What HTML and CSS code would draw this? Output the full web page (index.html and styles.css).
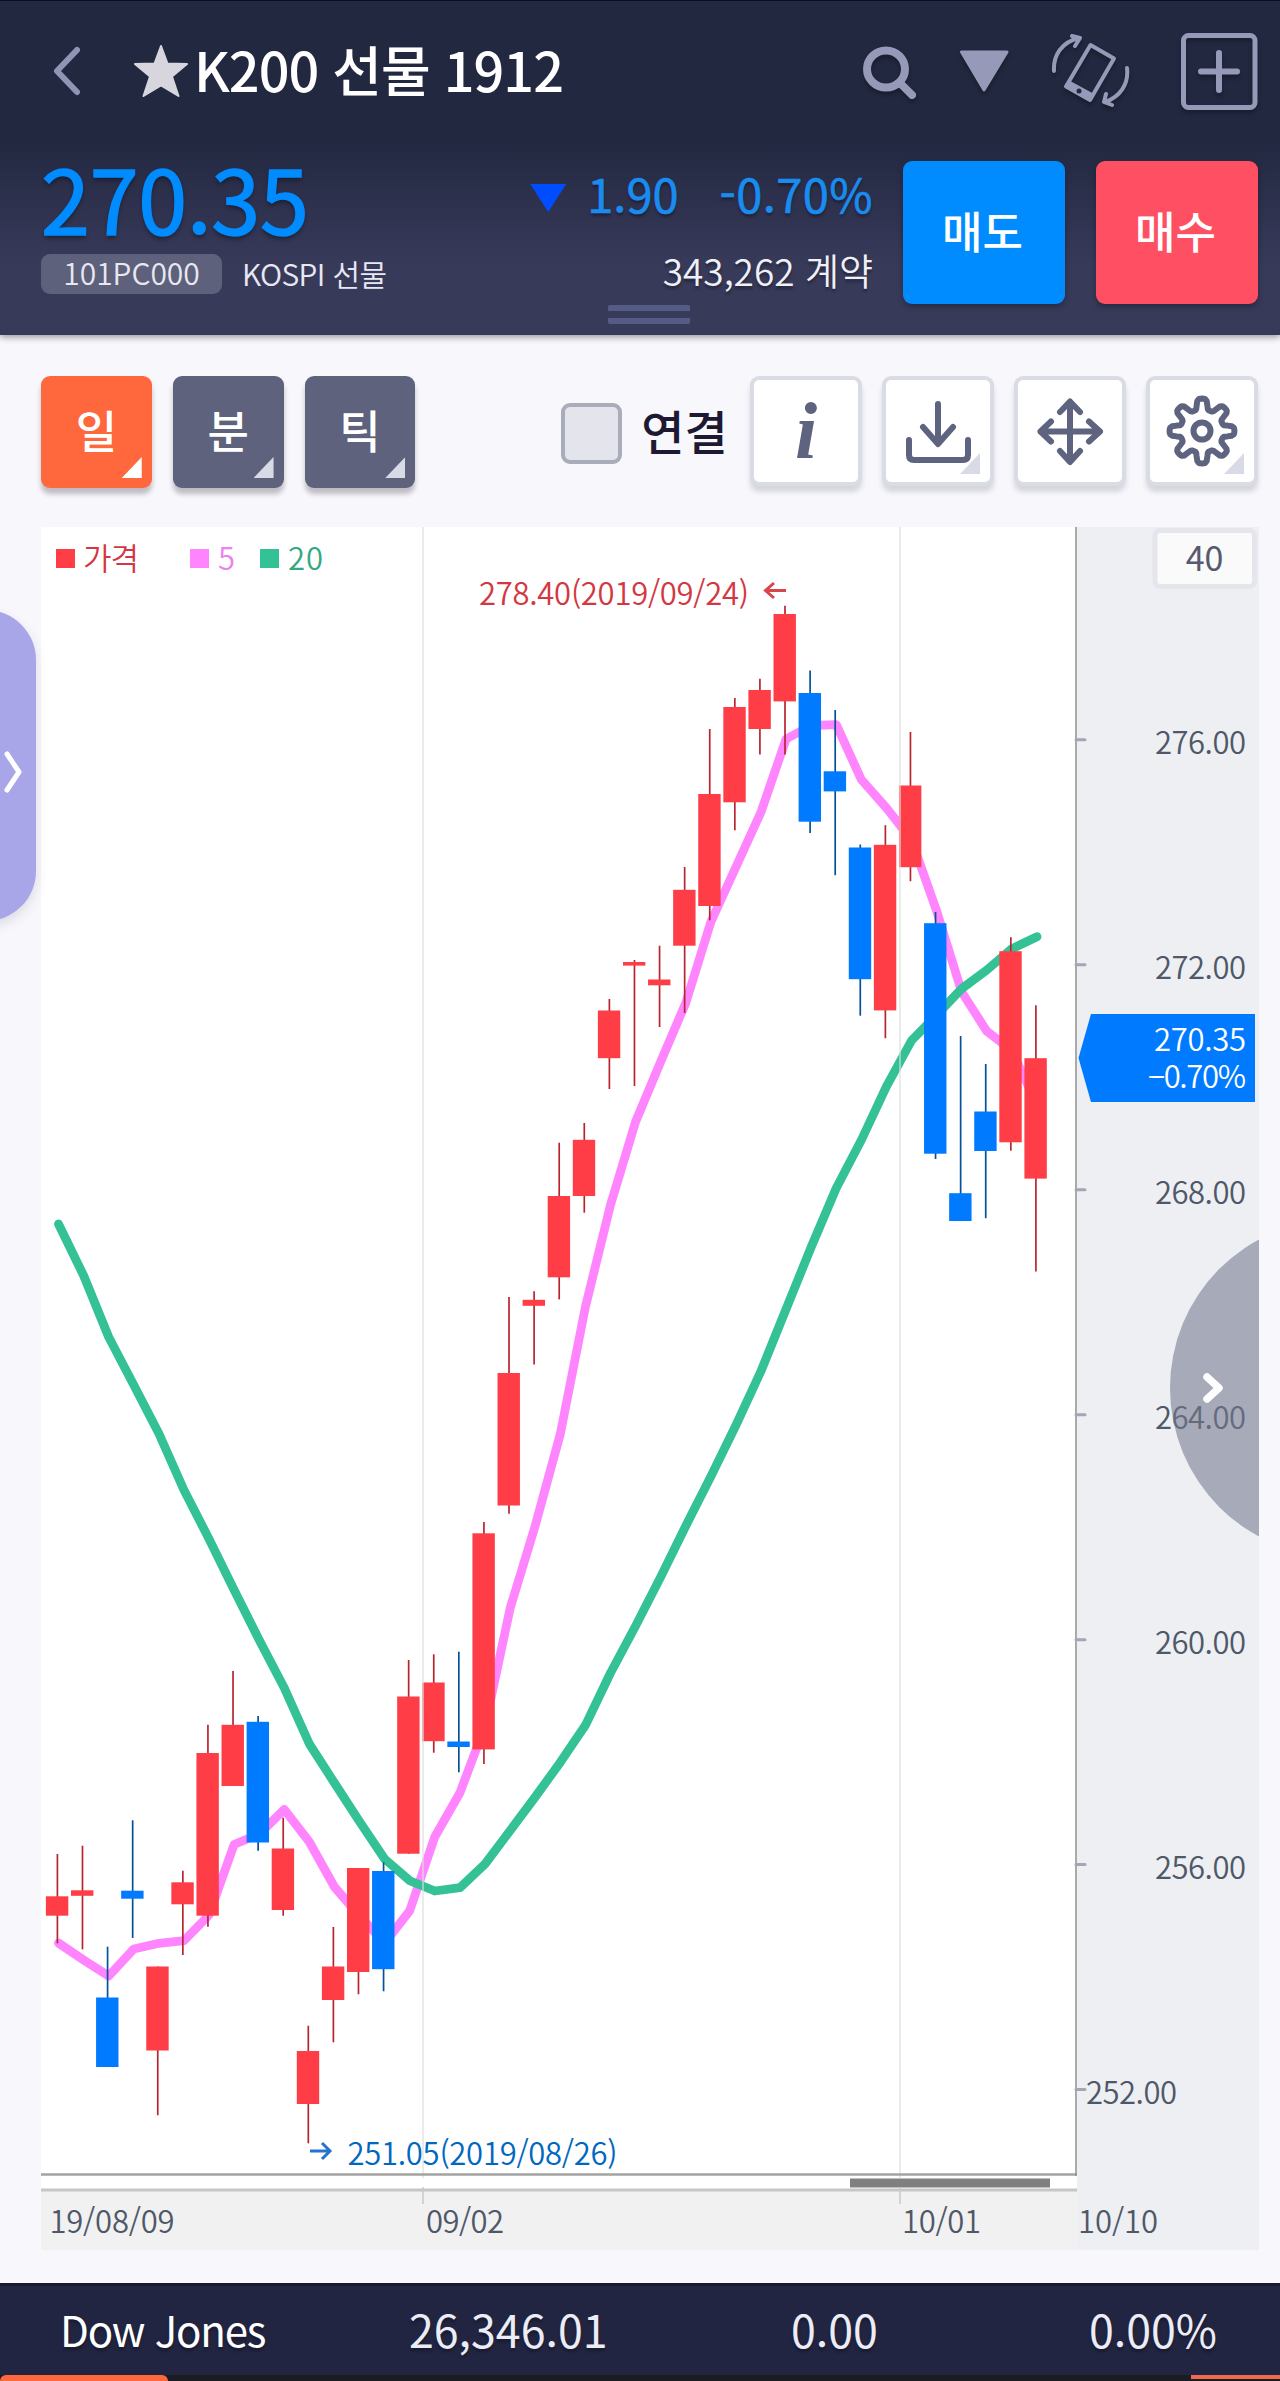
FILE: index.html
```html
<!DOCTYPE html>
<html lang="ko">
<head>
  <meta charset="UTF-8">
  <title>K200 선물 1912</title>
  <meta name="viewport" content="width=device-width, initial-scale=1">
  <link rel="stylesheet" href="styles.css">
</head>
<body>
  <header class="header">
    <div class="title-row">
      <svg class="icon-back" viewBox="0 0 30 50"><path d="M25 4 L5 25 L25 46"/></svg>
      <svg class="icon-star" viewBox="0 0 56 54"><path d="M28 2 L34.5 19.500 L54 20 L39 32.500 L45.500 52 L28 41.500 L10.500 52 L17 32.500 L2 20 L21.500 19.500 Z"/></svg>
      <h1>K200 선물 1912</h1>
      <div class="title-icons">
        <svg width="56" height="56" viewBox="860 42 56 56"><ellipse cx="886" cy="68" rx="19" ry="18.500" stroke-width="8"/><path d="M901 83 L912 94" stroke-width="8"/></svg>
        <svg width="50" height="44" viewBox="959 50 50 44"><path class="solid" d="M961.500 53 H1007 L984 91 Z"/></svg>
        <svg width="84" height="78" viewBox="1049 30 84 78">
          <path d="M1090.500 43 L1114 56.500 L1090 98 L1066 84.500 Z" stroke-width="4"/>
          <path class="solid" d="M1069 80 L1093 93 L1090 98 L1066 84 Z"/>
          <circle cx="1079" cy="89" r="2.500" fill="#222840" stroke="none"/>
          <path d="M1054 69 C1053 53 1062 40 1079 36 M1072 34 L1080 36 L1075 44" stroke-width="4"/>
          <path d="M1127 66 C1129 82 1120 95 1105 100 M1106 92 L1104 100 L1112 103" stroke-width="4"/>
        </svg>
        <svg width="78" height="78" viewBox="1180 31 78 78"><rect x="1183.500" y="34.500" width="71.500" height="72" rx="5" stroke-width="5"/><path d="M1201 70.500 H1237 M1219 52 V89" stroke-width="6"/></svg>
      </div>
    </div>
    <div class="quote-row">
      <div class="quote-left">
        <div class="price">270.35</div>
        <div class="code-line"><span class="code">101PC000</span><span class="market">KOSPI 선물</span></div>
      </div>
      <div class="quote-right">
        <div class="change"><span class="down"></span><span>1.90</span><span class="rate">-0.70%</span></div>
        <div class="volume">343,262 계약</div>
      </div>
      <button class="order sell">매도</button>
      <button class="order buy">매수</button>
    </div>
    <div class="handle"></div>
  </header>

  <div class="toolbar">
    <button class="period active">일</button>
    <button class="period">분</button>
    <button class="period">틱</button>
    <span class="checkbox"></span>
    <span class="check-label">연결</span>
    <button class="tool"><svg viewBox="0 0 104 104"><text class="info-i" x="52" y="79" text-anchor="middle">i</text></svg></button>
    <button class="tool corner"><svg viewBox="0 0 104 104"><path d="M52 25 V64 M37 48 L52 65 L67 48 M23 61 V76 Q23 81 28 81 H77 Q82 81 82 76 V61"/></svg></button>
    <button class="tool"><svg viewBox="0 0 104 104"><path d="M52 24 V82 M22.500 52.500 H81.500 M42 33 L52 22.500 L62 33 M42 72 L52 83 L62 72 M33 42.500 L22.500 52.500 L33 62.500 M71 42.500 L82 52.500 L71 62.500"/></svg></button>
    <button class="tool corner"><svg viewBox="0 0 104 104"><circle cx="52" cy="52" r="8.500"/><path id="gear"/></svg></button>
  </div>

  <main class="chart">
    <svg id="chart" viewBox="41 527 1218 1723">
      <rect x="41" y="527" width="1036" height="1664" fill="#fff"/>
      <rect x="41" y="2191" width="1036" height="59" fill="#f1f1f1"/>
      <rect x="1077" y="527" width="182" height="1723" fill="#edeff3"/>

      <!-- moving averages, candles -->
      <polyline id="ma5" class="ma" stroke="#ff85ff"/>
      <polyline id="ma20" class="ma" stroke="#34c196"/>
      <g id="candles"></g>

      <path d="M423 527 V2178 M900 527 V2178" stroke="#ddd" stroke-opacity=".6" stroke-width="2"/>
      <path d="M41 2174.500 H1077" stroke="#a3a3a3" stroke-width="2.500"/>
      <rect x="850" y="2178.500" width="200" height="9" fill="#808080"/>
      <path d="M41 2190 H1077" stroke="#c6c6c6" stroke-width="3"/>
      <path d="M423 2187 V2204 M900 2187 V2204" stroke="#c6c9cf" stroke-width="1.500"/>
      <path d="M1076 527 V2176" stroke="#8e8e8e" stroke-width="1.500"/>

      <!-- legend -->
      <rect x="56" y="549" width="19" height="19" fill="#ff3d46"/>
      <rect x="190" y="549" width="19" height="19" fill="#ff85ff"/>
      <rect x="260" y="549" width="19" height="19" fill="#34c196"/>
      <g class="label">
        <text x="83" y="570" textLength="56" fill="#d33842">가격</text>
        <text x="218" y="570" fill="#ec82ec">5</text>
        <text x="288" y="570" textLength="35" fill="#36a883">20</text>
        <text x="479" y="604.500" textLength="270" fill="#d33842">278.40(2019/09/24)</text>
        <text x="347.500" y="2165" textLength="270" fill="#0068c0">251.05(2019/08/26)</text>
      </g>
      <path d="M786 590.500 H766 M774 583 L765.500 590.500 L774 598" class="arrow" stroke="#d9444d"/>
      <path d="M310 2151 H329 M322 2143 L330 2151 L322 2159" class="arrow" stroke="#2673cf"/>

      <g id="prices" class="label axis"></g>
      <g class="label axis">
        <text x="49.500" y="2233" textLength="125">19/08/09</text>
        <text x="426" y="2233" textLength="78">09/02</text>
        <text x="902" y="2233" textLength="79">10/01</text>
        <text x="1078" y="2233" textLength="80">10/10</text>
      </g>

      <path d="M1078.500 1058 L1091 1014 H1255 V1102 H1091 Z" fill="#007aff"/>
      <g class="label" fill="#fff" text-anchor="end">
        <text x="1246" y="1051" textLength="92">270.35</text>
        <text x="1246" y="1088" textLength="98">−0.70%</text>
      </g>

      <rect x="1155" y="530.500" width="99.500" height="56" rx="5" fill="#fafafb" stroke="#e4e6ec" stroke-width="5"/>
      <text x="1204.500" y="570.500" class="count" text-anchor="middle">40</text>

      <circle cx="1338.500" cy="1388" r="168.500" fill="#74788f" fill-opacity=".58"/>
      <path d="M1207 1377 L1219 1388 L1207 1399" fill="none" stroke="#fff" stroke-width="7.500" stroke-linecap="round" stroke-linejoin="round"/>
    </svg>
  </main>

  <div class="side-tab"><svg width="20" height="46" viewBox="0 0 20 46"><path d="M3 5 L15 23 L3 41"/></svg></div>

  <footer class="ticker">
    <span class="name">Dow Jones</span>
    <span class="index">26,346.01</span>
    <span class="diff">0.00</span>
    <span class="pct">0.00%</span>
  </footer>
  <div class="tabs"><span class="tab-on"></span><span class="tab-next"></span></div>

  <script>
    const X0 = 56.9, STEP = 25.09;
    const UP = '#ff3d46', DOWN = '#007aff';

    // [up?, high, low, body top, body bottom]
    const bars = [
      [1, 1854, 1943.3, 1896.3, 1915.7], [1, 1845.7, 1949.3, 1890.3, 1895.8],
      [0, 1946.7, 2067, 1997.5, 2067], [0, 1820.3, 1938, 1890.7, 1898.7],
      [1, 1966.5, 2115.3, 1966.5, 2050.5], [1, 1870.7, 1955, 1882.3, 1904.3],
      [1, 1724.7, 1926.7, 1753, 1915.7], [1, 1671, 1786, 1724.8, 1786],
      [0, 1716, 1850.7, 1721.8, 1842.5], [1, 1817.7, 1915.7, 1848.5, 1910],
      [1, 2025.7, 2143.3, 2051, 2104], [1, 1927, 2042.3, 1966.5, 2000],
      [1, 1868, 1994.3, 1868, 1972], [0, 1862.3, 1991.3, 1871, 1969.2],
      [1, 1660, 1853.7, 1696.5, 1853.7], [1, 1654.3, 1752.7, 1682.5, 1741.2],
      [0, 1651.7, 1772.3, 1741.5, 1747], [1, 1522, 1764, 1533.3, 1749.4],
      [1, 1297, 1513.7, 1373, 1505.5], [1, 1291.3, 1364.6, 1299.8, 1305.8],
      [1, 1142.7, 1299.4, 1196, 1277.3], [1, 1123, 1212.7, 1139.8, 1196],
      [1, 999, 1089, 1010.5, 1058.2], [1, 960, 1086, 962, 965.6],
      [1, 945.7, 1027, 979.5, 985.3], [1, 867, 1013, 889.8, 945.7],
      [1, 729, 920.3, 794, 906], [1, 698, 830.3, 707, 802.3],
      [1, 678.7, 754.5, 690, 729], [1, 605.7, 754.5, 614, 701.4],
      [0, 670.5, 833, 693, 821.7], [0, 710, 875.2, 771.3, 791.4],
      [0, 844.5, 1015.7, 847.5, 979.2], [1, 825.2, 1038.2, 844.8, 1010.4],
      [1, 732, 881.2, 785.5, 867.2], [0, 912, 1159, 923.2, 1153.7],
      [0, 1036, 1221, 1193.2, 1221], [0, 1064, 1218.2, 1111.5, 1151],
      [1, 937.2, 1150.7, 951.2, 1142.3], [1, 1005.2, 1271.5, 1058.2, 1178.6]
    ];
    const ma5 = [1943, 1960, 1976, 1949, 1943.3, 1940.7, 1915, 1844.5, 1834, 1809.5,
      1842, 1887, 1916, 1943, 1910.7, 1836.7, 1792.7, 1726, 1608.3, 1525.7,
      1434, 1307, 1205, 1121.7, 1061.7, 1003, 922, 867, 812, 739,
      725.5, 724.6, 779.7, 808, 840, 911, 992, 1031.3, 1050.6, 1105];
    const ma20 = [1224, 1275.5, 1337, 1385, 1433.5, 1490, 1539, 1590, 1640, 1688,
      1744, 1783, 1821.7, 1859, 1880.7, 1891, 1887.7, 1864, 1830.6, 1797,
      1762.3, 1725.3, 1673, 1626, 1577, 1526, 1476.6, 1425.3, 1371, 1309,
      1247, 1188, 1140, 1086.4, 1040.5, 1015, 988.6, 970, 948.7, 936.7];

    document.getElementById('candles').innerHTML = bars.map(([up, hi, lo, top, bottom], i) => {
      const x = X0 + i * STEP;
      const c = up ? UP : DOWN;
      return `<path d="M${x + 0.5} ${hi}V${lo}" stroke="${up ? '#b8252f' : '#05529a'}" stroke-width="1.7"/>` +
        `<rect x="${x - 11}" y="${top}" width="22.4" height="${bottom - top}" fill="${c}"/>`;
    }).join('');

    const line = values => values.map((y, i) => `${58.5 + i * STEP},${y}`).join(' ');
    document.getElementById('ma5').setAttribute('points', line(ma5));
    document.getElementById('ma20').setAttribute('points', line(ma20));

    let labels = '';
    for (let p = 276; p >= 252; p -= 4) {
      const y = 739.8 + (276 - p) * 56.24;
      labels += `<path d="M1076 ${y}H1085" stroke="#a3a7b2" stroke-width="3" stroke-linecap="round"/>`;
      labels += `<text x="${p === 252 ? 1086 : 1155}" y="${y + 14.2}" textLength="91">${p}.00</text>`;
    }
    document.getElementById('prices').innerHTML = labels;

    // eight rounded teeth
    let gear = [];
    for (let a = 0; a <= 360; a += 3) {
      const t = a * Math.PI / 180;
      const r = 27 + 5.5 * Math.tanh(2.2 * Math.cos(8 * t));
      gear.push((52 + r * Math.cos(t)).toFixed(1) + ' ' + (52 + r * Math.sin(t)).toFixed(1));
    }
    document.getElementById('gear').setAttribute('d', 'M' + gear.join('L') + 'Z');
  </script>
</body>
</html>
```

FILE: styles.css
```css
* { box-sizing: border-box; }
html, body { margin: 0; padding: 0; }
body { width: 1280px; height: 2381px; overflow: hidden; position: relative; background: #f7f7fc; font-family: "Noto Sans CJK KR", "Noto Sans", sans-serif; }
button { border: none; padding: 0; font-family: inherit; }

.header {
  height: 335px;
  position: relative;
  color: #fff;
  background: linear-gradient(#222840 0, #222840 135px, #383a5a 265px, #383a5a 100%);
  border-top: 1px solid #0a0c1c;
  box-shadow: 0 2px 7px rgba(0,0,0,0.4);
}
.title-row { display: flex; align-items: center; height: 140px; padding: 0 22px 0 52px; }
.icon-back { width: 30px; height: 50px; fill: none; stroke: #8f95b5; stroke-width: 6; stroke-linecap: round; stroke-linejoin: round; }
.icon-star { width: 56px; height: 54px; margin-left: 51px; fill: #d7d6df; stroke: #d7d6df; stroke-width: 2; stroke-linejoin: round; }
h1 { margin: 0 0 5px 5px; font-size: 54px; line-height: 70px; font-weight: 500; letter-spacing: -1px; white-space: nowrap; }
.title-icons { display: flex; align-items: center; margin-left: auto; }
.title-icons svg { fill: none; stroke: #969ab8; stroke-linecap: round; stroke-linejoin: round; filter: drop-shadow(0 3px 2px rgba(0,0,0,0.3)); }
.title-icons svg + svg { margin-left: 43px; }
.title-icons svg:nth-child(3) { margin-left: 40px; }
.title-icons svg:nth-child(4) { margin-left: 47px; }
.title-icons .solid { fill: #969ab8; stroke-width: 3; }

.quote-row { display: flex; padding: 20px 22px 0 41px; }
.quote-left { flex: 1; }
.price { height: 93px; line-height: 71px; font-size: 88px; font-weight: 400; letter-spacing: -0.2px; color: #008cff; -webkit-text-stroke: 1.5px #008cff; text-shadow: 0 3px 4px rgba(0,0,0,0.4); }
.code-line { display: flex; align-items: center; font-size: 30px; line-height: 40px; color: #e8e8f2; font-weight: 350; }
.code { width: 181px; height: 40px; border-radius: 9px; background: #5e617c; text-align: center; line-height: 37px; }
.market { margin-left: 20px; line-height: 36px; margin-bottom: 3px; letter-spacing: -0.6px; }
.quote-right { text-align: right; margin-right: 30px; }
.change { display: flex; align-items: center; justify-content: flex-end; height: 70px; line-height: 64px; padding-bottom: 6px; font-size: 47px; font-weight: 400; color: #1a8cf0; -webkit-text-stroke: 0.6px #1a8cf0; text-shadow: 0 3px 3px rgba(0,0,0,0.35); }
.down { width: 36px; height: 28px; margin: 10px 21px 0 0; background: #004dff; clip-path: polygon(0 0, 100% 0, 50% 100%); }
.rate { margin-left: 41px; letter-spacing: 0.4px; }
.volume { margin-top: 14px; font-size: 37px; line-height: 50px; font-weight: 350; color: #f0f0f7; text-shadow: 0 3px 3px rgba(0,0,0,0.35); }
.order { width: 162px; height: 143px; padding: 0 3px 5px 0; border-radius: 9px; font-size: 44px; font-weight: 500; color: #fff; box-shadow: 0 3px 6px rgba(0,0,0,0.3); }
.sell { background: #008cff; margin-right: 31px; }
.buy { background: #ff5063; }
.handle { position: absolute; left: 608px; top: 304px; width: 82px; height: 19px; border: solid #545c86; border-width: 6px 0; border-radius: 2px; }

.toolbar { display: flex; align-items: flex-start; height: 192px; padding: 41px 22px 0 41px; }
.period { position: relative; width: 111px; height: 112px; padding-bottom: 4px; margin-right: 21px; border-radius: 9px; background: #5e627c; color: #fff; font-size: 45px; font-weight: 500; line-height: 100px; box-shadow: 0 6px 5px rgba(60,50,60,0.3); }
.period.active { background: #ff673d; }
.period::after, .corner::after { content: ""; position: absolute; right: 10px; bottom: 10px; width: 20px; height: 21px; background: #d8dbe6; clip-path: polygon(100% 0, 100% 100%, 0 100%); }
.period.active::after { background: #fff; }
.checkbox { width: 61px; height: 61px; margin: 27px 0 0 125px; border: 4px solid #a9adba; border-radius: 9px; background: #e3e4ec; }
.check-label { width: 88px; margin: 19px 0 0 19px; font-size: 47px; line-height: 70px; font-weight: 500; white-space: nowrap; color: #1d1932; }
.tool { position: relative; width: 112px; height: 110px; margin-left: 20px; border: 4px solid #dadce5; border-radius: 9px; background: #fff; box-shadow: 0 6px 5px rgba(60,60,80,0.18); }
.check-label + .tool { margin-left: 21px; }
.tool svg { display: block; width: 104px; height: 104px; margin-top: -1px; fill: none; stroke: #5e637f; stroke-width: 6; stroke-linecap: round; stroke-linejoin: round; }
.tool .info-i { font-family: "Liberation Serif", serif; font-size: 80px; font-weight: bold; font-style: italic; fill: #5e637f; stroke: none; }
.corner::after { bottom: 8px; }

.chart { height: 1723px; margin-left: 41px; width: 1218px; }
.chart svg { display: block; width: 1218px; height: 1723px; }
.ma { fill: none; stroke-width: 8.8; stroke-linecap: round; stroke-linejoin: round; }
.label { font-size: 31px; font-weight: 350; }
.axis { fill: #4f5868; }
.arrow { fill: none; stroke-width: 3; }
.count { font-size: 34px; fill: #555a6e; }

/* drawer handle sticking out of the left edge */
.side-tab { position: absolute; left: -70px; top: 610px; width: 106px; height: 311px; border-radius: 50px; background: #a8a6e8; box-shadow: 0 5px 12px rgba(60,60,90,0.15); display: flex; align-items: center; padding-left: 74px; }
.side-tab svg { fill: none; stroke: #fff; stroke-width: 5; stroke-linecap: round; stroke-linejoin: round; margin-top: 12px; }

.ticker { display: grid; grid-template-columns: 349px 382px 298px auto; height: 92px; margin-top: 33px; padding-left: 60px; background: #222542; border-top: 3px solid #15192f; color: #ececf6; font-size: 44.7px; line-height: 86px; font-weight: 400; }
.ticker .name { font-size: 42px; letter-spacing: -1.2px; color: #fff; }
.ticker span { text-shadow: 0 3px 3px rgba(0,0,0,0.3); }
.tabs { display: flex; justify-content: space-between; height: 6px; background: #1b1b22; }
.tab-on { width: 168px; background: #ff673d; border-radius: 6px 6px 0 0; }
.tab-next { width: 89px; height: 4px; background: #f0694a; }
```
